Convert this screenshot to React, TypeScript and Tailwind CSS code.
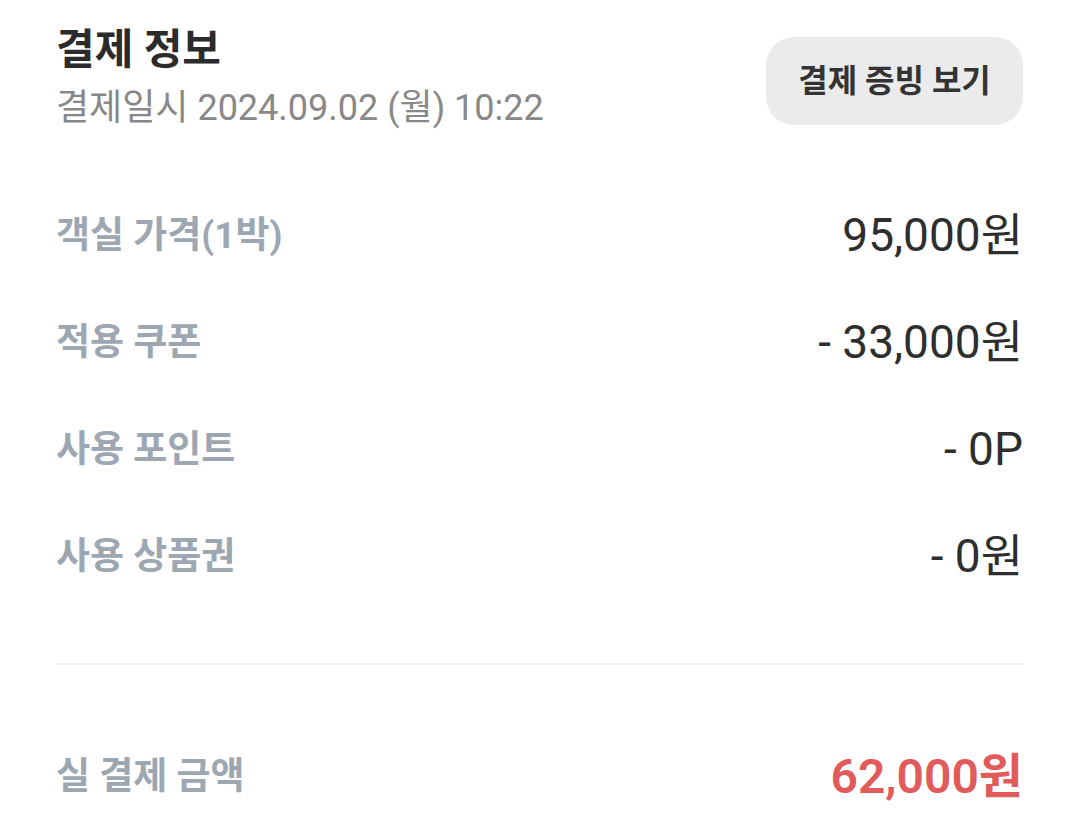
import React from "react";

const rows = [
  { label: "객실 가격(1박)", value: "95,000원" },
  { label: "적용 쿠폰", value: "- 33,000원" },
  { label: "사용 포인트", value: "- 0P" },
  { label: "사용 상품권", value: "- 0원" },
];

export default function App() {
  return (
    <div className="w-[1080px] h-[832px] bg-white overflow-hidden px-[56px] [font-family:Roboto,'Noto_Sans_CJK_KR',sans-serif]">
      <div className="flex justify-between items-start">
        <div className="pt-[24px]">
          <div className="text-[42px] leading-[52px] font-bold text-[#2b2b2b]">결제 정보</div>
          <div className="mt-[10px] text-[36px] leading-[44px] text-[#888888]">결제일시 2024.09.02 (월) 10:22</div>
        </div>
        <button className="mt-[37px] mr-[1px] w-[257px] h-[88px] rounded-[28px] bg-[#ebebeb] text-[32px] font-bold text-[#333333] flex items-center justify-center">
          결제 증빙 보기
        </button>
      </div>
      <div className="mt-[52px]">
        {rows.map((r) => (
          <div key={r.label} className="h-[107px] flex items-center justify-between">
            <span className="text-[37px] font-bold text-[#9ca7b2]">{r.label}</span>
            <span className="text-[46px] text-[#2e2e2e] mr-[1px]">{r.value}</span>
          </div>
        ))}
      </div>
      <div className="mt-[53px] h-[2px] bg-[#f1f1f1]" />
      <div className="mt-[58px] h-[107px] flex items-center justify-between">
        <span className="text-[37px] font-bold text-[#9ca7b2]">실 결제 금액</span>
        <span className="text-[48px] font-semibold text-[#e15b5b] mr-[1px]">62,000원</span>
      </div>
    </div>
  );
}
